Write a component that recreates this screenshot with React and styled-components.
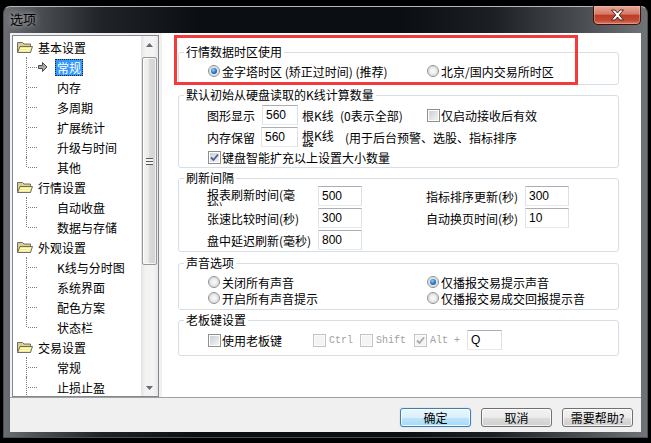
import React from "react";
import styled, { createGlobalStyle, css } from "styled-components";

const GlobalStyle = createGlobalStyle`
  html, body {
    margin: 0;
    padding: 0;
    background: #000;
  }
  body {
    font-family: "Noto Sans CJK SC", "Noto Sans", sans-serif;
    font-size: 12px;
    color: #000;
  }
  * {
    box-sizing: border-box;
  }
`;

const Screen = styled.div`
  width: 651px;
  height: 443px;
  overflow: hidden;
  padding: 6px 3px 0;
  background: #000;
`;

const Window = styled.div`
  height: 432px;
  display: flex;
  flex-direction: column;
  padding: 0 6px 5px;
  border: 1px solid #4c4f53;
  border-top-color: #b4b7ba;
  border-radius: 7px 7px 0 0;
  background: linear-gradient(
    90deg,
    #6a6d71 0%,
    #4d5054 5%,
    #202327 15%,
    #0b0e12 30%,
    #0b0e12 62%,
    #1c1f23 76%,
    #4a4d51 90%,
    #707377 100%
  );
`;

const TitleBar = styled.div`
  height: 26px;
  display: flex;
  justify-content: space-between;
  align-items: flex-start;
`;

const Title = styled.div`
  line-height: 24px;
  font-size: 13px;
  color: #000;
  text-shadow: 0 0 5px rgba(255, 255, 255, 0.55), 0 0 10px rgba(255, 255, 255, 0.35);
`;

const CloseButton = styled.div`
  width: 48px;
  height: 19px;
  margin-top: -1px;
  display: flex;
  align-items: center;
  justify-content: center;
  border: 1px solid #3a130d;
  border-top: none;
  border-radius: 0 0 5px 5px;
  background: linear-gradient(#e8a696 0%, #d47967 45%, #bf3c25 52%, #c24a34 80%, #dc7a63 100%);
  box-shadow: inset 0 0 0 1px rgba(255, 210, 200, 0.35);
`;

const Client = styled.div`
  flex: 1;
  display: flex;
  flex-direction: column;
  background: #f0f0f0;
  min-height: 0;
`;

const Main = styled.div`
  height: 365px;
  display: flex;
  gap: 3px;
  border-bottom: 1px solid #a0a0a0;
`;

const Tree = styled.div`
  width: 147px;
  margin: 2px 0 0 2px;
  display: flex;
  border: 1px solid #828790;
  background: #fff;
`;

const TreeList = styled.div`
  flex: 1;
  padding-top: 1px;
  overflow: hidden;
`;

const TreeRow = styled.div`
  position: relative;
  height: 20px;
  display: flex;
  align-items: center;
  padding-left: ${(p) => (p.$child ? 25 : 4)}px;

  ${(p) =>
    p.$child &&
    css`
      &::before {
        content: "";
        position: absolute;
        left: 13px;
        top: 0;
        height: ${p.$last ? 10 : 20}px;
        border-left: 1px dotted #7a7a7a;
      }
      &::after {
        content: "";
        position: absolute;
        left: 15px;
        top: 10px;
        width: 9px;
        border-top: 1px dotted #7a7a7a;
      }
    `}
`;

const IconSlot = styled.span`
  width: 17px;
  height: 20px;
  display: flex;
  align-items: center;
  flex-shrink: 0;
`;

const NodeText = styled.span`
  line-height: 15px;
  padding: 0 1px;
  margin-left: ${(p) => p.$gap || 0}px;
  border: 1px solid transparent;
  white-space: nowrap;

  ${(p) =>
    p.$selected &&
    css`
      background: #3399ff;
      color: #fff;
      border: 1px dotted #202020;
    `}
`;

const Scrollbar = styled.div`
  width: 17px;
  display: flex;
  flex-direction: column;
  background: linear-gradient(90deg, #e3e3e3, #f3f3f3 25%, #f3f3f3 75%, #e6e6e6);
`;

const ScrollButton = styled.div`
  height: 17px;
  display: flex;
  align-items: center;
  justify-content: center;
`;

const Track = styled.div`
  flex: 1;
  padding: 4px 1px 0;
`;

const Thumb = styled.div`
  height: 208px;
  display: flex;
  align-items: center;
  justify-content: center;
  border: 1px solid #979797;
  border-radius: 2px;
  background: linear-gradient(90deg, #f4f4f4, #e9e9e9 50%, #dadada 50%, #d2d2d2);
  box-shadow: inset 0 0 0 1px rgba(255, 255, 255, 0.7);
`;

const Grip = styled.div`
  width: 7px;
  height: 7px;
  background: repeating-linear-gradient(#5a5a5a 0 1px, #f4f4f4 1px 3px);
`;

const Panel = styled.div`
  position: relative;
  flex: 1;
  display: flex;
  flex-direction: column;
  padding: 11px 22px 0 16px;
  background: #fff;
`;

const Highlight = styled.div`
  position: absolute;
  left: 12px;
  top: 2px;
  width: 404px;
  height: 50px;
  border: 3px solid #f43a3a;
  pointer-events: none;
`;

const Group = styled.fieldset`
  margin: ${(p) => p.$top || 0}px 0 0;
  padding: 0;
  min-width: 0;
  border: 1px solid #d5dfe5;
  border-radius: 3px;
`;

const Legend = styled.legend`
  margin-left: 5px;
  padding: 0 2px;
  line-height: 16px;
`;

const GroupBody = styled.div`
  padding: ${(p) => p.$pt || 0}px 0 ${(p) => p.$pb || 0}px 28px;
`;

const Row = styled.div`
  height: ${(p) => p.$h || 20}px;
  margin-top: ${(p) => p.$mt || 0}px;
  display: flex;
  align-items: center;
`;

const Col = styled.div`
  width: ${(p) => p.$w}px;
  padding-left: ${(p) => p.$pl || 0}px;
  flex-shrink: 0;
  display: flex;
  align-items: center;
  white-space: nowrap;
`;

/* label whose text wraps and the second line is cut by the row, as in the dialog */
const ClipLabel = styled.span`
  display: block;
  width: ${(p) => p.$w}px;
  height: 20px;
  padding: 3px 0 0 ${(p) => p.$pl || 0}px;
  line-height: 12px;
  overflow: hidden;
  flex-shrink: 0;
`;

const Field = styled.input`
  width: ${(p) => p.$w}px;
  height: 20px;
  margin: 0;
  padding: 0 3px;
  border: 1px solid;
  border-color: #abadb3 #dbdfe6 #e3e9ef #e2e3ea;
  font-family: "Liberation Sans", Arial, sans-serif;
  font-size: 12px;
  color: #000;
  background: #fff;
  outline: none;
`;

const Radio = styled.span`
  position: relative;
  width: 12px;
  height: 12px;
  margin: 0 2px 0 1px;
  flex-shrink: 0;
  border-radius: 50%;
  border: 1px solid #8f9090;
  background: radial-gradient(circle, #f5f5f5 0 2px, #dcdcdc 4.5px, #f2f2f2 5px);

  ${(p) =>
    p.$checked &&
    css`
      &::after {
        content: "";
        position: absolute;
        left: 2px;
        top: 2px;
        width: 6px;
        height: 6px;
        border-radius: 50%;
        background: radial-gradient(circle at 40% 35%, #9ed2f7 0, #2b82d4 45%, #0c3f78 100%);
      }
    `}
`;

const CheckBox = styled.span`
  width: 13px;
  height: 13px;
  margin: 0 1px 0 1px;
  flex-shrink: 0;
  display: flex;
  align-items: center;
  justify-content: center;
  border: 1px solid ${(p) => (p.$disabled ? "#c4c4c4" : "#8e8f8f")};
  background: ${(p) =>
    p.$disabled ? "#f4f4f4" : "linear-gradient(135deg, #c9ccd2, #f7f7f7)"};
  box-shadow: inset 0 0 0 1px ${(p) => (p.$disabled ? "#fbfbfb" : "#fff")};
`;

const MonoText = styled.span`
  margin-left: 2px;
  font-family: "Liberation Mono", "Courier New", monospace;
  font-size: 10px;
  color: #a0a0a0;
  white-space: pre;
`;

const Bottom = styled.div`
  flex: 1;
  display: flex;
  justify-content: flex-end;
  align-items: flex-start;
  gap: 10px;
  padding: 10px 8px 0 0;
`;

const Button = styled.button`
  width: 71px;
  height: 19px;
  padding: 0;
  font-family: "Noto Sans CJK SC", sans-serif;
  font-size: 12px;
  line-height: 17px;
  color: #000;
  border: 1px solid #707070;
  border-radius: 3px;
  background: linear-gradient(#f2f2f2 0%, #ebebeb 50%, #dddddd 50%, #cfcfcf 100%);
  box-shadow: inset 0 0 0 1px rgba(255, 255, 255, 0.75);

  ${(p) =>
    p.$default &&
    css`
      border-color: #3c7fb1;
      background: linear-gradient(#eaf6fd 0%, #d9f0fc 50%, #bee6fd 50%, #a7d9f5 100%);
      box-shadow: inset 0 0 0 1px rgba(255, 255, 255, 0.8), 0 0 1px #48a8e8;
    `}
`;

const CheckMark = ({ color }) => (
  <svg width="9" height="9" viewBox="0 0 9 9">
    <path d="M1 4.5 L3.5 7 L8 1.5" fill="none" stroke={color} strokeWidth="1.8" />
  </svg>
);

const Check = ({ checked, disabled }) => (
  <CheckBox $disabled={disabled}>
    {checked && <CheckMark color={disabled ? "#a8a8a8" : "#4a5f97"} />}
  </CheckBox>
);

const FolderIcon = () => (
  <svg width="16" height="13" viewBox="0 0 16 13">
    <path d="M0.5 1.5 H5.5 L7 3 H13.5 V11.5 H0.5 Z" fill="#d9cf8a" stroke="#6e6e6e" />
    <path d="M0.5 11.5 L3 5.5 H15.5 L13.5 11.5 Z" fill="#f5ea80" stroke="#6e6e6e" />
    <path d="M3 7.5 H13.5 M2.5 9.5 H13" stroke="#fffbd0" strokeWidth="1" />
  </svg>
);

const ArrowIcon = () => (
  <svg width="10" height="10" viewBox="0 0 10 10">
    <polygon
      points="0.5,3.5 4.5,3.5 4.5,0.5 9,5 4.5,9.5 4.5,6.5 0.5,6.5"
      fill="#a8a8a8"
      stroke="#4a4a4a"
    />
  </svg>
);

const CloseGlyph = () => (
  <svg width="15" height="12" viewBox="0 0 15 12">
    <path
      d="M1.5 1 H5 L7.5 4 L10 1 H13.5 L9.3 6 L13.5 11 H10 L7.5 8 L5 11 H1.5 L5.7 6 Z"
      fill="#fff"
      stroke="#4a2a24"
      strokeWidth="1"
    />
  </svg>
);

const Triangle = ({ down }) => (
  <svg width="7" height="4" viewBox="0 0 7 4">
    <polygon points={down ? "0,0 7,0 3.5,4" : "0,4 7,4 3.5,0"} fill="#6a6a6a" />
  </svg>
);

const treeData = [
  { title: "基本设置", children: ["常规", "内存", "多周期", "扩展统计", "升级与时间", "其他"] },
  { title: "行情设置", children: ["自动收盘", "数据与存储"] },
  { title: "外观设置", children: ["K线与分时图", "系统界面", "配色方案", "状态栏"] },
  { title: "交易设置", children: ["常规", "止损止盈"], more: true },
];

function SettingsTree() {
  return (
    <Tree>
      <TreeList>
        {treeData.map((group, gi) => (
          <React.Fragment key={group.title}>
            <TreeRow>
              <FolderIcon />
              <NodeText $gap={3}>{group.title}</NodeText>
            </TreeRow>
            {group.children.map((child, ci) => {
              const selected = gi === 0 && ci === 0;
              const last = ci === group.children.length - 1 && !group.more;
              return (
                <TreeRow key={child + ci} $child $last={last}>
                  <IconSlot>{selected && <ArrowIcon />}</IconSlot>
                  <NodeText $selected={selected}>{child}</NodeText>
                </TreeRow>
              );
            })}
          </React.Fragment>
        ))}
      </TreeList>
      <Scrollbar>
        <ScrollButton>
          <Triangle />
        </ScrollButton>
        <Track>
          <Thumb>
            <Grip />
          </Thumb>
        </Track>
        <ScrollButton>
          <Triangle down />
        </ScrollButton>
      </Scrollbar>
    </Tree>
  );
}

function SettingsPanel() {
  return (
    <Panel>
      <Group>
        <Legend>行情数据时区使用</Legend>
        <GroupBody $pt={3} $pb={5}>
          <Row $h={16}>
            <Col $w={219}>
              <Radio $checked />
              金字塔时区 (矫正过时间) (推荐)
            </Col>
            <Col $w={180}>
              <Radio />
              北京/国内交易所时区
            </Col>
          </Row>
        </GroupBody>
      </Group>

      <Group $top={2}>
        <Legend>默认初始从硬盘读取的K线计算数量</Legend>
        <GroupBody $pt={2} $pb={2}>
          <Row>
            <Col $w={55}>图形显示</Col>
            <Field $w={36} defaultValue="560" readOnly />
            <Col $w={42} $pl={4}>根K线</Col>
            <Col $w={86}>(0表示全部)</Col>
            <Col $w={150}>
              <Check />
              仅启动接收后有效
            </Col>
          </Row>
          <Row $mt={2}>
            <Col $w={54}>内存保留</Col>
            <Field $w={37} defaultValue="560" readOnly />
            <ClipLabel $w={47} $pl={4}>
              根K线
              <br />
              警、
            </ClipLabel>
            <Col $w={200}>(用于后台预警、选股、指标排序</Col>
          </Row>
          <Row $h={16} $mt={2}>
            <Col $w={300}>
              <Check checked />
              键盘智能扩充以上设置大小数量
            </Col>
          </Row>
        </GroupBody>
      </Group>

      <Group $top={2}>
        <Legend>刷新间隔</Legend>
        <GroupBody $pb={1}>
          <Row>
            <Col $w={219}>
              <ClipLabel $w={111}>
                报表刷新时间(毫
                <br />
                秒)
              </ClipLabel>
              <Field $w={44} defaultValue="500" readOnly />
            </Col>
            <Col $w={143}>
              <Col $w={99}>指标排序更新(秒)</Col>
              <Field $w={44} defaultValue="300" readOnly />
            </Col>
          </Row>
          <Row $mt={2}>
            <Col $w={219}>
              <Col $w={111}>张速比较时间(秒)</Col>
              <Field $w={44} defaultValue="300" readOnly />
            </Col>
            <Col $w={143}>
              <Col $w={99}>自动换页时间(秒)</Col>
              <Field $w={44} defaultValue="10" readOnly />
            </Col>
          </Row>
          <Row $mt={2}>
            <Col $w={219}>
              <Col $w={111}>盘中延迟刷新(毫秒)</Col>
              <Field $w={44} defaultValue="800" readOnly />
            </Col>
          </Row>
        </GroupBody>
      </Group>

      <Group $top={3}>
        <Legend>声音选项</Legend>
        <GroupBody $pt={3} $pb={3}>
          <Row $h={16}>
            <Col $w={219}>
              <Radio />
              关闭所有声音
            </Col>
            <Col $w={180}>
              <Radio $checked />
              仅播报交易提示声音
            </Col>
          </Row>
          <Row $h={16}>
            <Col $w={219}>
              <Radio />
              开启所有声音提示
            </Col>
            <Col $w={180}>
              <Radio />
              仅播报交易成交回报提示音
            </Col>
          </Row>
        </GroupBody>
      </Group>

      <Group $top={2}>
        <Legend>老板键设置</Legend>
        <GroupBody $pt={2} $pb={5}>
          <Row>
            <Col $w={105}>
              <Check />
              使用老板键
            </Col>
            <Col $w={47}>
              <Check disabled />
              <MonoText>Ctrl</MonoText>
            </Col>
            <Col $w={54}>
              <Check disabled />
              <MonoText>Shift</MonoText>
            </Col>
            <Col $w={54}>
              <Check checked disabled />
              <MonoText>Alt +</MonoText>
            </Col>
            <Field $w={35} defaultValue="Q" readOnly />
          </Row>
        </GroupBody>
      </Group>

      <Highlight />
    </Panel>
  );
}

export default function App() {
  return (
    <>
      <GlobalStyle />
      <Screen>
        <Window>
          <TitleBar>
            <Title>选项</Title>
            <CloseButton>
              <CloseGlyph />
            </CloseButton>
          </TitleBar>
          <Client>
            <Main>
              <SettingsTree />
              <SettingsPanel />
            </Main>
            <Bottom>
              <Button $default>确定</Button>
              <Button>取消</Button>
              <Button>需要帮助?</Button>
            </Bottom>
          </Client>
        </Window>
      </Screen>
    </>
  );
}
